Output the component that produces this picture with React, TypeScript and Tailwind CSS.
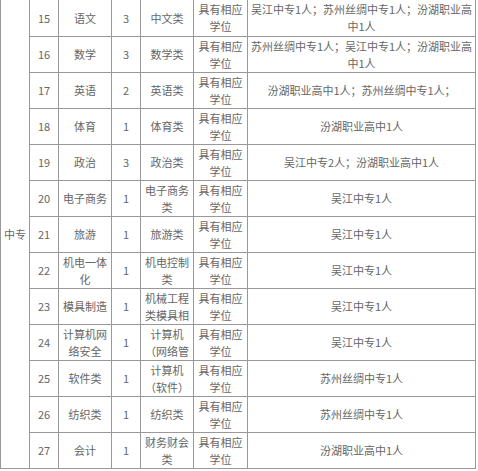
import React from 'react';

type Row = {
  no: string;
  subject: string[];
  count: string;
  major: string[];
  degree: string[];
  schools: string[];
};

const rows: Row[] = [
  { no: '15', subject: ['语文'], count: '3', major: ['中文类'], degree: ['具有相应', '学位'], schools: ['吴江中专1人；苏州丝绸中专1人；汾湖职业高', '中1人'] },
  { no: '16', subject: ['数学'], count: '3', major: ['数学类'], degree: ['具有相应', '学位'], schools: ['苏州丝绸中专1人；吴江中专1人；汾湖职业高', '中1人'] },
  { no: '17', subject: ['英语'], count: '2', major: ['英语类'], degree: ['具有相应', '学位'], schools: ['汾湖职业高中1人；苏州丝绸中专1人；'] },
  { no: '18', subject: ['体育'], count: '1', major: ['体育类'], degree: ['具有相应', '学位'], schools: ['汾湖职业高中1人'] },
  { no: '19', subject: ['政治'], count: '3', major: ['政治类'], degree: ['具有相应', '学位'], schools: ['吴江中专2人；汾湖职业高中1人'] },
  { no: '20', subject: ['电子商务'], count: '1', major: ['电子商务', '类'], degree: ['具有相应', '学位'], schools: ['吴江中专1人'] },
  { no: '21', subject: ['旅游'], count: '1', major: ['旅游类'], degree: ['具有相应', '学位'], schools: ['吴江中专1人'] },
  { no: '22', subject: ['机电一体', '化'], count: '1', major: ['机电控制', '类'], degree: ['具有相应', '学位'], schools: ['吴江中专1人'] },
  { no: '23', subject: ['模具制造'], count: '1', major: ['机械工程', '类模具相'], degree: ['具有相应', '学位'], schools: ['吴江中专1人'] },
  { no: '24', subject: ['计算机网', '络安全'], count: '1', major: ['计算机', '（网络管'], degree: ['具有相应', '学位'], schools: ['吴江中专1人'] },
  { no: '25', subject: ['软件类'], count: '1', major: ['计算机', '（软件）'], degree: ['具有相应', '学位'], schools: ['苏州丝绸中专1人'] },
  { no: '26', subject: ['纺织类'], count: '1', major: ['纺织类'], degree: ['具有相应', '学位'], schools: ['苏州丝绸中专1人'] },
  { no: '27', subject: ['会计'], count: '1', major: ['财务财会', '类'], degree: ['具有相应', '学位'], schools: ['汾湖职业高中1人'] },
];

function Cell({ lines }: { lines: string[] }) {
  return (
    <div className="flex flex-col items-center justify-center overflow-hidden border-r border-b border-[#999] text-center">
      {lines.map((l, i) => (
        <span key={i} className="whitespace-nowrap">
          {l}
        </span>
      ))}
    </div>
  );
}

export default function App() {
  return (
    <div className="h-[471px] w-[478px] overflow-hidden bg-white">
      <div
        className="grid w-[476px] grid-cols-[30px_29px_53px_29px_53px_54px_228px] grid-rows-[37px_repeat(12,36px)] text-[11px] leading-[17px] text-[#666]"
        style={{ fontFamily: '"Noto Sans CJK SC", "Noto Sans", sans-serif' }}
      >
        <div className="row-span-13 flex items-center justify-center border-x border-b border-[#999]">中专</div>
        {rows.map((r) => (
          <React.Fragment key={r.no}>
            <Cell lines={[r.no]} />
            <Cell lines={r.subject} />
            <Cell lines={[r.count]} />
            <Cell lines={r.major} />
            <Cell lines={r.degree} />
            <Cell lines={r.schools} />
          </React.Fragment>
        ))}
      </div>
    </div>
  );
}
